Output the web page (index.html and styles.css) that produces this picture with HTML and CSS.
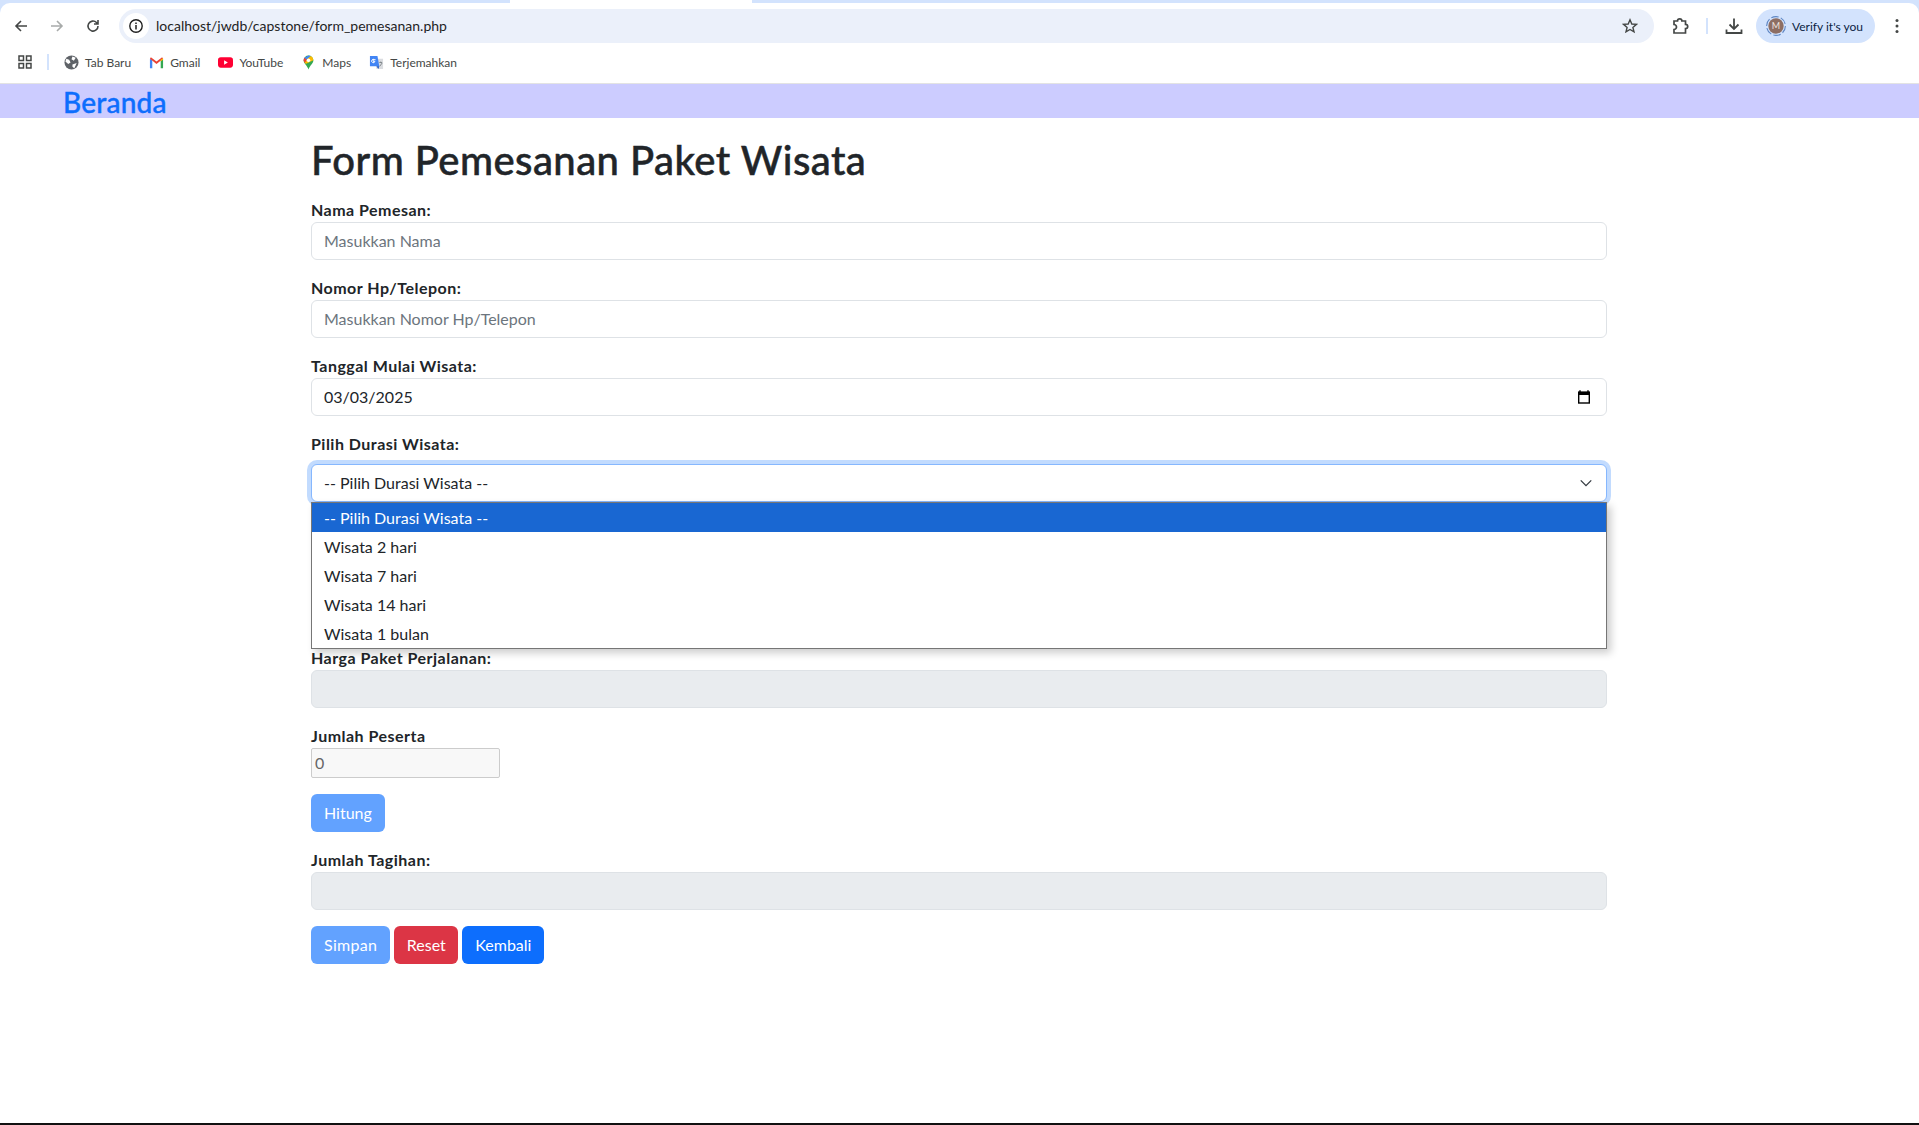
FILE: index.html
```html
<!DOCTYPE html>
<html lang="id">
<head>
<meta charset="utf-8">
<title>Form Pemesanan</title>
<link rel="stylesheet" href="styles.css">
</head>
<body>
<header class="chrome">
  <div class="tabstrip"><span class="tab-blue tab-left"></span><span class="tab-gap"></span><span class="tab-blue tab-right"></span></div>
  <div class="chrome-body">
  <div class="toolbar">
    <svg class="nav" viewBox="0 0 16 16"><path d="M14 8H3M8 3L3 8l5 5" fill="none" stroke="#444746" stroke-width="1.6"/></svg>
    <svg class="nav" viewBox="0 0 16 16"><path d="M2 8h11M8 3l5 5-5 5" fill="none" stroke="#a8abaa" stroke-width="1.6"/></svg>
    <svg class="nav" viewBox="0 0 16 16"><path d="M13 8a5 5 0 1 1-1.500-3.500L13 6M13 2v4H9" fill="none" stroke="#444746" stroke-width="1.6"/></svg>
    <div class="omnibox">
      <span class="site-info"><svg viewBox="0 0 16 16" width="16" height="16"><circle cx="8" cy="8" r="6.200" fill="none" stroke="#1f1f1f" stroke-width="1.400"/><path d="M8 7v4.400M8 4.400v1.500" stroke="#1f1f1f" stroke-width="1.500"/></svg></span>
      <span class="url">localhost/jwdb/capstone/form_pemesanan.php</span>
      <svg class="star" viewBox="0 0 16 16"><path d="M8 1.800l1.800 4.200 4.600.4-3.500 3 1.100 4.500L8 11.500l-4 2.400 1.100-4.500-3.500-3 4.600-.4z" fill="none" stroke="#444746" stroke-width="1.400"/></svg>
    </div>
    <svg class="tool ext" viewBox="0 0 18 18"><path d="M3 4h3.500a2.200 2.200 0 0 1 4.400 0h3.600v3.300a2.200 2.200 0 0 1 0 4.400V16H3v-3.500a2.500 2.500 0 0 0 0-5z" fill="none" stroke="#444746" stroke-width="1.700"/></svg>
    <span class="divider"></span>
    <svg class="tool dl" viewBox="0 0 18 18"><path d="M9 1.500v10M4.500 7.500L9 12l4.500-4.500M1.500 12.500v3.500h15v-3.500" fill="none" stroke="#444746" stroke-width="1.800"/></svg>
    <div class="verify">
      <svg class="avatar" viewBox="0 0 20 20"><circle cx="10" cy="10" r="9.400" fill="none" stroke="#5f87c4" stroke-width="1.100" stroke-dasharray="7.500 2.300"/><circle cx="10" cy="10" r="7.700" fill="#8d6e63"/><text class="avatar-letter" x="10" y="13">M</text></svg>
      <span class="verify-text">Verify it's you</span>
    </div>
    <svg class="menu" viewBox="0 0 4 16"><circle cx="2" cy="2.500" r="1.500" fill="#444746"/><circle cx="2" cy="8" r="1.500" fill="#444746"/><circle cx="2" cy="13.500" r="1.500" fill="#444746"/></svg>
  </div>
  <div class="bookmarks">
    <svg class="apps" viewBox="0 0 14 14"><path d="M1 1h4.500v4.500H1zM8.500 1H13v4.500H8.500zM1 8.500h4.500V13H1zM8.500 8.500H13V13H8.500z" fill="none" stroke="#444746" stroke-width="1.500"/></svg>
    <span class="bm-divider"></span>
    <span class="bm"><svg class="bm-ic" viewBox="0 0 16 16"><circle cx="8" cy="8" r="7.500" fill="#5f6368"/><path d="M2.500 4l3 1 1.500 3-2.500 1.500-3-2.500zM9 1.500l3.500 1.500-2 3-2.500-1.500zM9 10l4.500-1.500-2.500 5.500-2-1.500z" fill="#fff"/></svg>Tab Baru</span>
    <span class="bm"><svg class="bm-ic" viewBox="0 0 16 16"><path d="M1 14V4l2.500 1.500V14z" fill="#4285f4"/><path d="M15 14V4l-2.500 1.500V14z" fill="#34a853"/><path d="M1 4l7 5.500L15 4l-1-1.500L8 6.800 2 2.500z" fill="#ea4335"/><path d="M12.500 5L15 3.500V5l-2.500 2z" fill="#fbbc04"/></svg>Gmail</span>
    <span class="bm"><svg class="bm-ic" viewBox="0 0 16 16"><rect y="2.500" width="16" height="11" rx="3" fill="#ff0033"/><path d="M6.500 5.700v4.600L10.500 8z" fill="#fff"/></svg>YouTube</span>
    <span class="bm"><svg class="bm-ic" viewBox="0 0 16 16"><path d="M8 .5a5.200 5.200 0 0 1 5.200 5.200c0 3.500-3.700 5.300-5.200 9.800-1.500-4.500-5.200-6.300-5.200-9.800A5.200 5.200 0 0 1 8 .5z" fill="#34a853"/><path d="M3.500 3L8 .5a5.200 5.200 0 0 1 2.500.6L6 5.700z" fill="#4285f4"/><path d="M10.500 1.100a5.200 5.200 0 0 1 2.700 4.600L5 9.500 3.500 7z" fill="#fbbc04"/><path d="M2.800 5.700A5.200 5.200 0 0 1 3.600 3L6.300 5.400 4 8.300a5 5 0 0 1-1.200-2.600z" fill="#ea4335"/><circle cx="8" cy="5.700" r="1.900" fill="#fff"/></svg>Maps</span>
    <span class="bm"><svg class="bm-ic" viewBox="0 0 16 16"><path d="M6 4h9v11H8z" fill="#dadce0"/><path d="M1 1h8l2 11H1z" fill="#4285f4"/><path d="M8 12l2 3 1-3z" fill="#1a56c4"/><path d="M11 8h3M12.500 7v1M11.500 12l2.500-3.500" stroke="#80868b" stroke-width="1"/><path d="M7 5H4.500v2H6.300a1.800 1.800 0 1 1-.5-1.900" fill="none" stroke="#fff" stroke-width="1"/></svg>Terjemahkan</span>
  </div>
  </div>
</header>
<nav class="topnav"><a class="brand" href="#">Beranda</a></nav>
<main class="form-wrap">
  <h1 class="title">Form Pemesanan Paket Wisata</h1>
  <div class="field">
    <label class="lbl">Nama Pemesan:</label>
    <div class="control placeholder">Masukkan Nama</div>
  </div>
  <div class="field">
    <label class="lbl">Nomor Hp/Telepon:</label>
    <div class="control placeholder">Masukkan Nomor Hp/Telepon</div>
  </div>
  <div class="field">
    <label class="lbl">Tanggal Mulai Wisata:</label>
    <div class="control with-icon">03/03/2025
      <svg class="cal" viewBox="0 0 14 14"><path d="M3 .2v2M11 .2v2" stroke="#000" stroke-width="1.400"/><path d="M1 1.500h12V5H1z" fill="#000"/><rect x="1.700" y="2.500" width="10.600" height="10.500" fill="none" stroke="#000" stroke-width="1.400"/></svg>
    </div>
  </div>
  <div class="field field-select">
    <label class="lbl">Pilih Durasi Wisata:</label>
    <div class="control focus with-icon">-- Pilih Durasi Wisata --
      <svg class="chev" viewBox="0 0 16 16"><path d="M2 5l6 6 6-6" fill="none" stroke="#343a40" stroke-width="1.500"/></svg>
    </div>
    <ul class="dropdown">
      <li class="opt selected">-- Pilih Durasi Wisata --</li>
      <li class="opt">Wisata 2 hari</li>
      <li class="opt">Wisata 7 hari</li>
      <li class="opt">Wisata 14 hari</li>
      <li class="opt">Wisata 1 bulan</li>
    </ul>
  </div>
  <div class="field">
    <label class="lbl">Harga Paket Perjalanan:</label>
    <div class="control disabled"></div>
  </div>
  <div class="field">
    <label class="lbl">Jumlah Peserta</label>
    <div class="number">0</div>
  </div>
  <div class="field"><button class="btn btn-light-blue">Hitung</button></div>
  <div class="field">
    <label class="lbl">Jumlah Tagihan:</label>
    <div class="control disabled"></div>
  </div>
  <div class="actions">
    <button class="btn btn-light-blue btn-simpan">Simpan</button>
    <button class="btn btn-red">Reset</button>
    <button class="btn btn-blue">Kembali</button>
  </div>
</main>
<div class="taskbar-edge"></div>
</body>
</html>
```
FILE: styles.css
```css
* { box-sizing: border-box; }
html, body { margin: 0; padding: 0; }
body {
  width: 1919px;
  height: 1125px;
  overflow: hidden;
  background: #fff;
  color: #212529;
  font-family: "Lato", "Noto Sans", sans-serif;
  font-size: 16px;
  position: relative;
}
.chrome { height: 84px; background: #d3e3fd; border-bottom: 1px solid #e3e3e3; }
.tabstrip { height: 3px; display: flex; }
.tab-blue { background: #d3e3fd; height: 3px; }
.tab-left { width: 510px; border-bottom-right-radius: 6px; }
.tab-gap { width: 242px; background: #fff; }
.tab-right { flex: 1; border-bottom-left-radius: 6px; }
.chrome-body { height: 80px; background: #fff; border-radius: 10px 10px 0 0; overflow: hidden; }
.toolbar { height: 40px; margin-top: 3px; display: flex; align-items: center; padding: 0 0 0 13px; }
.nav { width: 16px; height: 16px; margin-right: 20px; flex: none; }
.omnibox {
  width: 1535px;
  height: 34px;
  margin-left: -2px;
  background: #ebf0fa;
  border-radius: 17px;
  display: flex;
  align-items: center;
  padding: 0 16px 0 4px;
  flex: none;
}
.site-info { width: 26px; height: 26px; border-radius: 50%; background: #fff; display: flex; align-items: center; justify-content: center; flex: none; }
.url { font-size: 14px; color: #1f1f1f; margin-left: 7px; padding-bottom: 2px; flex: 1; }
.star { width: 16px; height: 16px; flex: none; }
.tool { width: 18px; height: 18px; flex: none; }
.ext { margin-left: 17px; }
.divider { width: 2px; height: 16px; background: #d3e3fd; margin: 0 17px; flex: none; }
.verify {
  width: 119px;
  height: 34px;
  background: #d3e3fd;
  border-radius: 17px;
  margin-left: 13px;
  display: flex;
  align-items: center;
  padding-left: 10px;
  flex: none;
}
.avatar { width: 20px; height: 20px; flex: none; }
.avatar-letter { font-size: 9px; fill: #f0e6e0; text-anchor: middle; }
.verify-text { font-size: 12px; color: #0b1f44; margin-left: 6px; white-space: nowrap; }
.menu { width: 4px; height: 16px; margin-left: 20px; flex: none; }
.bookmarks { height: 28px; margin-top: 2px; display: flex; align-items: center; padding-left: 18px; font-size: 12px; color: #444746; }
.apps { width: 14px; height: 14px; flex: none; }
.bm-divider { width: 2px; height: 16px; background: #d3e3fd; margin: 0 15px; }
.bm { display: flex; align-items: center; margin-right: 18px; }
.bm-ic { width: 15px; height: 15px; margin-right: 6px; }
.topnav { height: 34px; background: #ccf; padding-left: 63px; }
.brand { color: #0d6efd; text-decoration: none; font-size: 28px; line-height: 36px; font-weight: 500; letter-spacing: .2px; -webkit-text-stroke: .4px #0d6efd; }
.form-wrap { width: 1296px; margin-left: 311px; }
.title { font-size: 40px; font-weight: 500; line-height: 48px; margin: 18px 0 14px; color: #212529; letter-spacing: .45px; -webkit-text-stroke: .5px #212529; }
.field { margin-bottom: 16px; position: relative; }
.lbl { display: block; font-weight: 700; line-height: 24px; height: 24px; letter-spacing: .48px; }
.control {
  height: 38px;
  border: 1px solid #dee2e6;
  border-radius: 6px;
  padding: 0 12px 2px;
  display: flex;
  align-items: center;
  justify-content: space-between;
  background: #fff;
  color: #212529;
}
.placeholder { color: #6c757d; }
.disabled { background: #e9ecef; }
.focus { border-color: #86b7fe; box-shadow: 0 0 0 4px rgba(13,110,253,.25); margin-top: 8px; }
.cal { width: 14px; height: 14px; margin: 2px 3px 0 0; }
.chev { width: 14px; height: 14px; margin: 2px 1px 0 0; }
.field-select { height: 214px; margin-bottom: 0; }
.dropdown {
  position: absolute;
  left: 0;
  right: 0;
  top: 70px;
  margin: 0;
  padding: 0;
  list-style: none;
  border: 1px solid #767676;
  background: #fff;
  box-shadow: 4px 4px 8px rgba(0,0,0,.2);
  z-index: 5;
}
.opt { height: 29px; line-height: 29px; padding-left: 12px; }
.selected { background: #1967d2; color: #fff; }
.number {
  width: 189px;
  height: 30px;
  border: 1px solid #ccc;
  border-radius: 2px;
  background: #f8f8f8;
  color: #666;
  padding-left: 3px;
  line-height: 28px;
}
.btn { height: 38px; border: 0; border-radius: 6px; color: #fff; font: inherit; padding: 0 13px 2px; }
.btn-light-blue { background: #62a2ff; }
.btn-simpan { letter-spacing: .3px; }
.btn-red { background: #dc3545; padding: 0 12.5px 2px; }
.btn-blue { background: #0d6efd; }
.actions { display: flex; gap: 4px; }
.taskbar-edge { position: absolute; left: 0; right: 0; bottom: 0; height: 2px; background: #111; }
```
